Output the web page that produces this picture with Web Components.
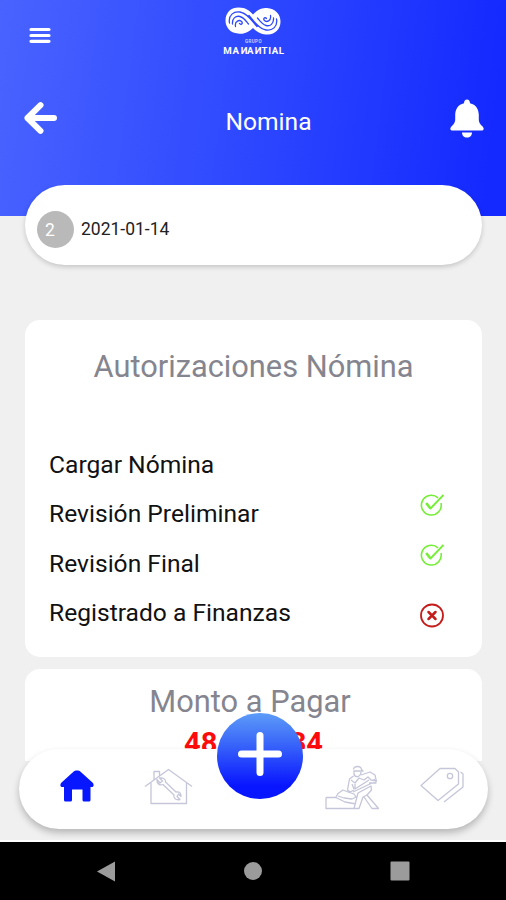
<!DOCTYPE html>
<html lang="es">
<head>
<meta charset="utf-8">
<title>Nomina</title>
<style>
html,body{margin:0;height:100%;overflow:hidden}
body{font-family:Roboto,"Liberation Sans",sans-serif;background:#f0f0f0;color:#111}
</style>
</head>
<body>
<payroll-app></payroll-app>
<script>
const define = (name, html) => customElements.define(name, class extends HTMLElement {
  constructor() {
    super();
    this.attachShadow({ mode: 'open' }).innerHTML = html;
  }
});

define('brand-logo', `
<style>
:host{display:flex;flex-direction:column;align-items:center;color:#fff;width:70px}
svg{display:block;margin-left:-1px}
small{font-size:4.5px;line-height:5px;margin-top:4px;letter-spacing:.4px;font-weight:500;opacity:.8}
b{font-size:9.700px;line-height:10px;margin-top:2px;letter-spacing:.6px;font-weight:700;white-space:nowrap;margin-left:1px}
i{display:inline-block;font-style:normal;transform:scaleX(-1)}
</style>
<svg width="56" height="28" viewBox="0 0 56 28" fill="none" stroke="#2f49ff" stroke-width="1.300" stroke-linecap="round">
<path fill="#fff" stroke="none" d="M28 21C22 27 17 27 13 26.500C5 26 .5 20 .5 13.500C.5 5 6.500.500 13.500.500C21 .500 25 4 28 7.500C33 2 37 1 42 1C50 1.500 55.500 7 55.500 14.500C55.500 22 50 27.500 43 27.500C36 27.500 32 25 28 21Z"/>
<path d="M4.500 16C3 8 9 4 15 5C23 6.500 27 14 32 19.500M51.500 12C53 20 47 24 41 23C33 21.500 29 14 24 8.500"/>
<path d="M7.500 17C7 11 11 8.500 15 9.500C19 10.500 21 14 23.500 17M48.500 11C49 17 45 19.500 41 18.500C37 17.500 35 14 32.500 11"/>
<path d="M10.500 19.500C9.500 14 14.500 12 17 15C18 17 15.500 18 14.500 16.500M45.500 8.500C46.500 14 41.500 16 39 13C38 11 40.500 10 41.500 11.500"/>
</svg>
<small>GRUPO</small>
<b>MA<i>N</i>A<i>N</i>TIAL</b>`);

define('app-header', `
<style>
:host{display:flex;flex-direction:column;height:215.500px;box-sizing:border-box;background:linear-gradient(97deg,#4963ff 0%,#2c46ff 52%,#1429ff 96%);color:#fff}
.row{display:grid;grid-template-columns:1fr auto 1fr;align-items:center}
.top{height:70px;padding:0 23px 0 24px}
.top brand-logo{align-self:start;margin-top:7px}
.menu{margin-left:5px}
.bar{height:66px;padding:15px 22px 0 23px}
h1{font-size:24.600px;line-height:30px;font-weight:400;margin:8px -15px 0 15px}
.bell{justify-self:end}
svg{display:block}
</style>
<div class="row top">
<svg class="menu" width="22" height="17" stroke="#fff" stroke-width="3.200" stroke-linecap="round" viewBox="0 0 22 17"><path d="M2 2.500H20M2 8.500H20M2 14.300H20"/></svg>
<brand-logo></brand-logo><span></span>
</div>
<div class="row bar">
<svg width="35" height="34" viewBox="0 0 35 34" fill="none" stroke="#fff" stroke-width="6" stroke-linecap="round" stroke-linejoin="round"><path d="M17.500 4.200L4.500 17L17.500 29.800M4.500 17H31"/></svg>
<h1>Nomina</h1>
<svg class="bell" width="34" height="39" viewBox="0 0 34 39" fill="#fff"><path d="M17 .5C18.800.5 20 2 20 4.200C26 5.500 28.800 10.500 28.800 16V20C28.800 24 30.500 25.500 32.600 27.500C34.600 29.500 33.500 31.500 31.800 31.500H2.200C.5 31.500-.6 29.500 1.400 27.500C3.500 25.500 5.200 24 5.200 20V16C5.200 10.500 8 5.500 14 4.200C14 2 15.200.5 17 .5ZM12 33.500H22C22 36.500 20 38.500 17 38.500S12 36.500 12 33.500Z"/></svg>
</div>`);

define('period-pill', `
<style>
:host{display:flex;align-items:center;gap:7px;height:80px;box-sizing:border-box;padding:8px 12px 0;border-radius:40px;background:#fff;box-shadow:0 2px 5px rgba(0,0,0,.18);font-size:17.500px;color:#222}
.n{width:37px;height:37px;line-height:38px;border-radius:50%;background:#b9b9b9;color:#fff;box-sizing:border-box;padding-left:8px}
</style>
<span class="n"><slot name="number"></slot></span><slot></slot>`);

define('info-card', `
<style>
:host{display:block;background:#fff;border-radius:15px;box-sizing:border-box}
h2{margin:0;text-align:center;font-size:30.800px;line-height:36px;font-weight:400;color:#85858f}
</style>
<h2><slot name="title"></slot></h2><slot></slot>`);

const ok = `<svg width="24" height="23" viewBox="0 0 24 23" fill="none" stroke="#75ee35" stroke-width="1.600"><path d="M18 3.800A9.900 9.900 0 1 0 21 9"/><path stroke-width="2.600" d="M6.200 9L10.500 14.500"/><path stroke-width="1.900" d="M10 15L23.500 1"/></svg>`;
const no = `<svg width="24" height="25" viewBox="0 0 24 25" fill="none" stroke="#c51c1c"><circle cx="12" cy="12.500" r="11" stroke-width="1.800"/><path stroke-width="2.500" stroke-linecap="round" d="M8.500 9L15.500 16M15.500 9L8.500 16"/></svg>`;
customElements.define('status-row', class extends HTMLElement {
  constructor() {
    super();
    const state = this.getAttribute('state');
    this.attachShadow({ mode: 'open' }).innerHTML = `
<style>
:host{display:flex;justify-content:space-between;align-items:flex-start;height:49.300px;font-size:24.600px;line-height:33px;color:#111}
svg{display:block;margin-top:${state === 'no' ? 7 : -3}px}
</style>
<span><slot></slot></span>${state === 'ok' ? ok : state === 'no' ? no : ''}`;
  }
});

define('tab-bar', `
<style>
:host{display:grid;grid-template-columns:1fr 1fr 90px 1fr 1fr;align-items:center;justify-items:center;height:80px;box-sizing:border-box;padding:0 10px;border-radius:40px;background:#fff;box-shadow:0 4px 7px rgba(0,0,0,.24)}
svg{display:block}
.line{fill:none;stroke:#c5c6d9;stroke-width:1.300;stroke-linejoin:round}
.home{margin:-7px 0 0 7px}.repair{margin:-5px 0 0 10px}.work{margin:-3px -17px 0 0}.tags{margin:-8px -18px 0 0}
</style>
<svg class="home" width="34" height="32" viewBox="0 0 34 32" fill="#0717ff"><path d="M14 1.200Q15 .4 16 .4H18Q19 .4 20 1.200L33 13Q34.500 16 32.500 17H30.500V30Q30.500 31.500 29 31.500H24Q22.500 31.500 22.500 30V19.500H12V30Q12 31.500 10.500 31.500H5.500Q4 31.500 4 30V17H1.500Q-.5 16 1 13Z"/></svg>
<svg class="repair line" width="49" height="37" viewBox="0 0 49 37"><path d="M1 18.500L24.500 1.500L48 18.500M7 15V35.500H42.500V15M10 12V3.500H15.500V8"/><path d="M13 11.500C13 17 16.500 17.500 19 16.500L30 27C29 30 32 32.500 36 31.500L33 28.500L34.500 26L37 28.500C37 24.500 35 23.500 32 24L21.500 14C22 11 19 9.500 15.500 10L18.500 13L16 15Z"/></svg>
<span></span>
<svg class="work line" width="54" height="45" viewBox="0 0 54 45"><path d="M1 32.500H11M1 32.500V43.500H29M11 32.500L20 37L31 39M11 32L13 28.500L18 25L23 27L29 29L31 32L27 34L19 33L13 31M28.500 4.500C29 .5 36 .5 36.500 4.500L38 6H28.500M29 6V9C30 13 35.500 12.500 36 7M28.500 11L24.500 14L22.500 25L25 27L29 25M36 10L45 7L50 10L51.500 17M26 15L30 18L34 13L39 15L43 12L46 15L52 16M44 18H51L49 14M29 24L27 19M30 19V24L44 15M28 27L47 18M33 28L46 21L46.500 25L42 30L53.500 43.500H47L39 32M33 28L29 43.500H34L38 32L42 30"/></svg>
<svg class="tags line" width="44" height="36" viewBox="0 0 44 36"><path d="M20 1.500H35L38.500 5V17L18 33.500L1 18.500ZM40.500 5L43 7V20L24 35"/><circle cx="30" cy="9" r="2.700"/></svg>`);

define('add-button', `
<style>
:host{display:grid;place-items:center;width:86px;height:86px;border-radius:50%;background:linear-gradient(180deg,#5d9cf8 0%,#3a67f9 35%,#0815ff 85%)}
svg{margin-top:-5px}
</style>
<svg width="44" height="44" viewBox="0 0 44 44" stroke="#fff" stroke-width="7" stroke-linecap="round"><path d="M22 3.500V40.500M3.500 22H40.500"/></svg>`);

define('system-bar', `
<style>
:host{display:flex;justify-content:space-between;align-items:center;height:58px;box-sizing:border-box;background:#000;padding:0 96px}
svg{display:block}
</style>
<svg width="19" height="21" fill="#9b9b9b"><path d="M1 10.500L19 .5V20.500Z"/></svg>
<svg width="18" height="18" fill="#9b9b9b" style="margin-left:1px"><circle cx="9" cy="9" r="9"/></svg>
<svg width="20" height="20" fill="#9b9b9b"><rect x=".5" y=".5" width="19" height="19" rx="1"/></svg>`);

define('payroll-app', `
<style>
:host{display:flex;flex-direction:column;position:relative;width:506px;height:900px;overflow:hidden;background:#f0f0f0}
main{flex:1;min-height:0;overflow:hidden;padding:0 24px 0 25px;margin-top:-30.500px}
app-header{flex:none}
.auth{margin-top:55px;height:337px;padding:29px 38px 0 24px}
.auth [slot=title]{margin-left:14px}
.rows{padding-top:63px}
.amount{margin-top:12px;height:92px;padding-top:15px;border-radius:15px 15px 0 0}
.amount [slot=title]{margin-right:7px}
.sum{display:flex;justify-content:space-between;width:139px;margin:5px auto 0;font-size:29px;line-height:36px;font-weight:700;color:#fb0b0b}
tab-bar{position:absolute;left:19px;top:749px;width:469px}
add-button{position:absolute;left:217px;top:713px}
.edge{height:2px;background:#fff;flex:none}
system-bar{flex:none}
</style>
<app-header></app-header>
<main>
<period-pill><span slot="number">2</span>2021-01-14</period-pill>
<info-card class="auth"><span slot="title">Autorizaciones Nómina</span>
<div class="rows">
<status-row>Cargar Nómina</status-row>
<status-row state="ok">Revisión Preliminar</status-row>
<status-row state="ok">Revisión Final</status-row>
<status-row state="no">Registrado a Finanzas</status-row>
</div></info-card>
<info-card class="amount"><span slot="title">Monto a Pagar</span>
<div class="sum"><span>48</span><span>34</span></div></info-card>
</main>
<div class="edge"></div>
<system-bar></system-bar>
<tab-bar></tab-bar>
<add-button></add-button>`);
</script>
</body>
</html>
